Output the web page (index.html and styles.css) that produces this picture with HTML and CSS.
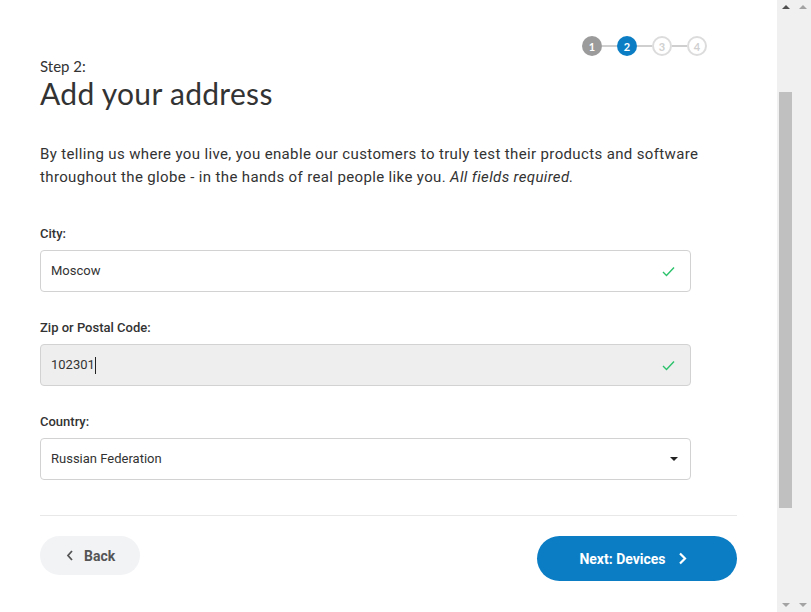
FILE: index.html
```
<!DOCTYPE html>
<html>
<head>
<meta charset="utf-8">
<link rel="stylesheet" href="styles.css">
</head>
<body>
<div class="window">
  <main class="main">
    <div class="stepper">
      <span class="dot done">1</span>
      <span class="line"></span>
      <span class="dot current">2</span>
      <span class="line"></span>
      <span class="dot todo">3</span>
      <span class="line"></span>
      <span class="dot todo">4</span>
    </div>
    <div class="eyebrow">Step 2:</div>
    <h1 class="title">Add your address</h1>
    <p class="intro">By telling us where you live, you enable our customers to truly test their products and software throughout the globe - in the hands of real people like you. <em>All fields required.</em></p>

    <div class="field">
      <label class="label">City:</label>
      <div class="input">
        <span class="value">Moscow</span>
        <svg class="check" width="13" height="11" viewBox="0 0 13 11"><path d="M1 6 L4.5 9.5 L12 1.5" fill="none" stroke="#2bc26b" stroke-width="1.4"/></svg>
      </div>
    </div>

    <div class="field">
      <label class="label">Zip or Postal Code:</label>
      <div class="input focused">
        <span class="value">102301</span><span class="caret"></span>
        <svg class="check" width="13" height="11" viewBox="0 0 13 11"><path d="M1 6 L4.5 9.5 L12 1.5" fill="none" stroke="#2bc26b" stroke-width="1.4"/></svg>
      </div>
    </div>

    <div class="field">
      <label class="label">Country:</label>
      <div class="input">
        <span class="value">Russian Federation</span>
        <svg class="arrow" width="8" height="4" viewBox="0 0 8 4"><path d="M0 0 H8 L4 4 Z" fill="#222"/></svg>
      </div>
    </div>

    <hr class="sep">

    <div class="actions">
      <button class="btn back">
        <svg width="8" height="11" viewBox="0 0 8 11"><path d="M6 1 L2 5.5 L6 10" fill="none" stroke="#555" stroke-width="1.8"/></svg>
        <span>Back</span>
      </button>
      <button class="btn next">
        <span>Next: Devices</span>
        <svg width="9" height="13" viewBox="0 0 9 13"><path d="M2 1.5 L7 6.5 L2 11.5" fill="none" stroke="#fff" stroke-width="2.2"/></svg>
      </button>
    </div>
  </main>
  <div class="scrollbar inner">
    <span class="arr up dark"></span>
    <div class="track"><div class="thumb"></div></div>
    <span class="arr down"></span>
  </div>
  <div class="scrollbar outer">
    <span class="arr up"></span>
    <div class="track"></div>
    <span class="arr down"></span>
  </div>
</div>
</body>
</html>
```
FILE: styles.css
```
* { box-sizing: border-box; }
html, body { margin: 0; padding: 0; }
body { background: #fff; color: #333; font-family: Roboto, "Liberation Sans", sans-serif; }
.window { display: flex; width: 811px; height: 612px; overflow: hidden; }
.main { width: 777px; flex: none; padding: 36px 40px 0 40px; }

.stepper { display: flex; justify-content: flex-end; align-items: center; height: 20px; padding-right: 30px; }
.dot { width: 20px; height: 20px; border-radius: 50%; display: flex; align-items: center; justify-content: center; font: 700 11px/1 Lato, sans-serif; }
.dot.done { background: #9b9b9b; color: #fff; }
.dot.current { background: #0b7dc4; color: #fff; }
.dot.todo { background: #fff; border: 2px solid #dcdcdc; color: #d0d0d0; }
.line { width: 15px; height: 2px; background: #cfcfcf; }

.eyebrow { font: 400 15px/20px Lato, sans-serif; color: #333; }
.title { margin: 0; font: 400 30px/34px Lato, sans-serif; color: #333; letter-spacing: 0.3px; }
.intro { margin: 33px 0 0; font-size: 15px; line-height: 23px; letter-spacing: 0.36px; color: #333; width: 697px; }

.field { margin-top: 36px; width: 651px; }
.field + .field { margin-top: 27px; }
.label { display: block; font-size: 13px; line-height: 18px; font-weight: 500; color: #333; margin-bottom: 7px; }
.input { height: 42px; border: 1px solid #d2d2d2; border-radius: 4px; display: flex; align-items: center; padding: 0 15px 0 10px; font-size: 13px; color: #333; background: #fff; }
.input.focused { background: #eeeeee; }
.value { line-height: 18px; }
.caret { width: 1px; height: 17px; background: #222; margin-left: 0; }
.check { margin-left: auto; }
.arrow { margin-left: auto; margin-right: -3px; }

.sep { margin: 35px 0 0; border: 0; border-top: 1px solid #e8e8e8; width: 697px; }

.actions { display: flex; justify-content: space-between; align-items: flex-start; margin-top: 20px; width: 697px; }
.btn { border: 0; display: flex; align-items: center; font-family: Roboto, sans-serif; font-weight: 700; font-size: 14px; cursor: pointer; }
.back { width: 100px; height: 39px; border-radius: 20px; background: #f2f3f5; color: #555; padding: 0 0 0 26px; gap: 10px; }
.next { width: 200px; height: 45px; border-radius: 23px; background: #0b7dc4; color: #fff; justify-content: center; gap: 12px; padding: 0 8px 0 0; }

.scrollbar { width: 17px; flex: none; background: #f0f0f0; display: flex; flex-direction: column; align-items: center; }
.arr { width: 0; height: 0; border-left: 4px solid transparent; border-right: 4px solid transparent; margin: 5px 0; }
.arr.up { border-bottom: 4px solid #a3a3a3; }
.arr.up.dark { border-bottom-color: #505050; }
.arr.down { border-top: 4px solid #a3a3a3; }
.track { flex: 1; width: 100%; padding-top: 78px; padding-bottom: 90px; display: flex; justify-content: center; }
.thumb { width: 13px; height: 416px; background: #c0c0c0; }
```
